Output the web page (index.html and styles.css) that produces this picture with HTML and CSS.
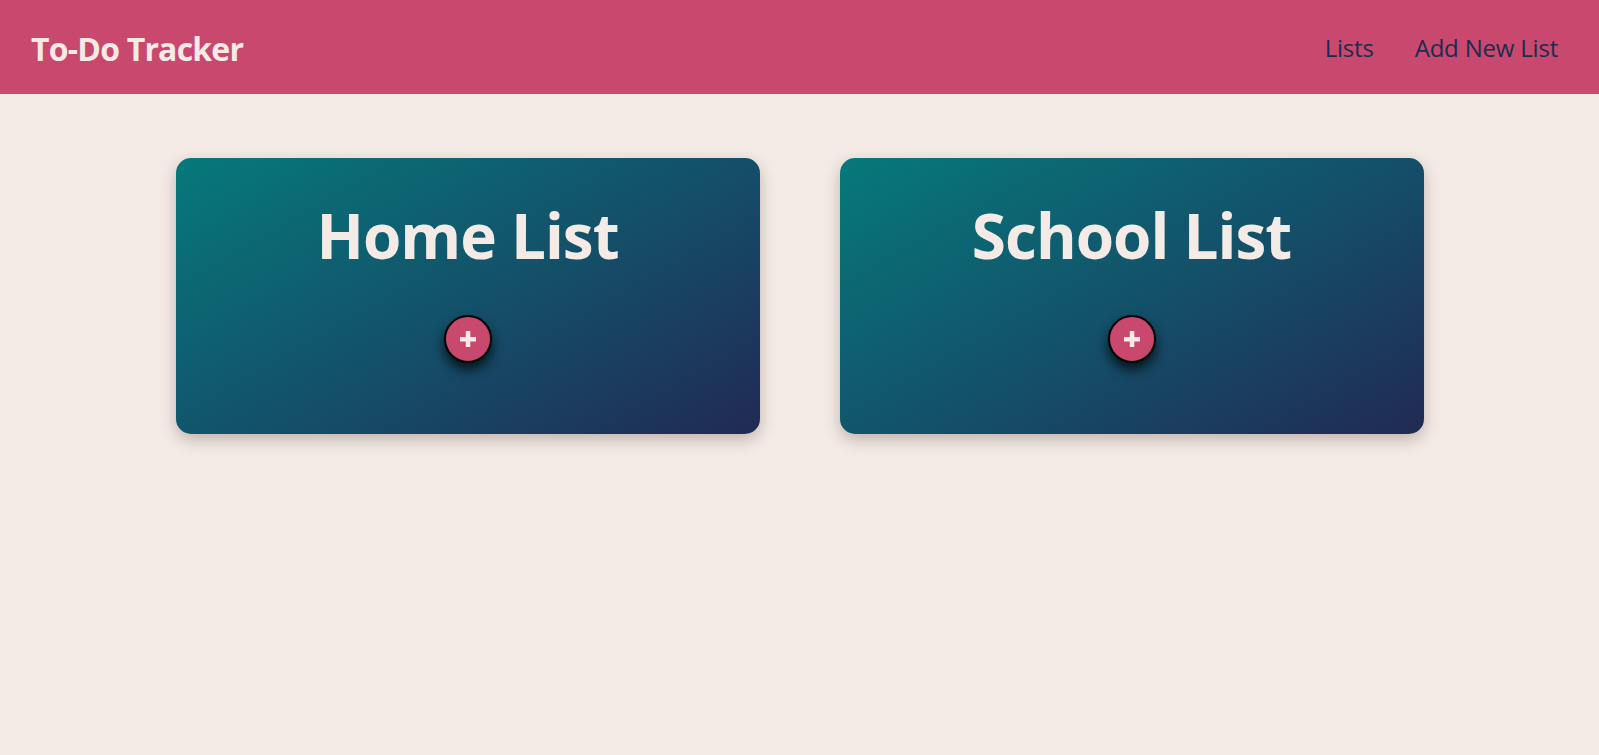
FILE: index.html
```html
<!DOCTYPE html>
<html lang="en">
<head>
<meta charset="utf-8">
<title>To-Do Tracker</title>
<link rel="stylesheet" href="styles.css">
</head>
<body>
<header class="topbar">
  <div class="brand">To-Do Tracker</div>
  <nav class="nav">
    <a class="nav-link" href="#">Lists</a>
    <a class="nav-link" href="#">Add New List</a>
  </nav>
</header>
<main class="lists">
  <section class="card">
    <h2 class="card-title">Home List</h2>
    <button class="add-btn" aria-label="Add item">
      <svg width="16" height="16" viewBox="0 0 16 16"><rect x="0" y="6" width="16" height="4.5" fill="#f4ebe6"/><rect x="5.8" y="0" width="4.5" height="16" fill="#f4ebe6"/></svg>
    </button>
  </section>
  <section class="card">
    <h2 class="card-title">School List</h2>
    <button class="add-btn" aria-label="Add item">
      <svg width="16" height="16" viewBox="0 0 16 16"><rect x="0" y="6" width="16" height="4.5" fill="#f4ebe6"/><rect x="5.8" y="0" width="4.5" height="16" fill="#f4ebe6"/></svg>
    </button>
  </section>
</main>
</body>
</html>
```

FILE: styles.css
```css
* { box-sizing: border-box; }

body {
  margin: 0;
  background: #f4ebe6;
  font-family: "Open Sans", "Noto Sans", sans-serif;
  min-height: 100vh;
}

.topbar {
  height: 94px;
  background: #c9486d;
  display: flex;
  align-items: center;
  justify-content: space-between;
  padding: 0 41px 0 31px;
}

.brand {
  color: #f4ebe6;
  font-size: 32px;
  font-weight: 700;
  letter-spacing: -0.8px;
  padding-top: 2px;
}

.nav {
  display: flex;
  gap: 41px;
}

.nav-link {
  color: #1e2a50;
  font-size: 24px;
  letter-spacing: -0.2px;
  text-decoration: none;
}

.lists {
  display: flex;
  justify-content: center;
  gap: 80px;
  margin-top: 64px;
}

.card {
  width: 584px;
  height: 276px;
  border-radius: 15px;
  background: linear-gradient(150deg, #06797b 0%, #13526a 50%, #212a54 100%);
  box-shadow: 0 6px 16px rgba(60, 40, 30, 0.28);
  display: flex;
  flex-direction: column;
  align-items: center;
  padding-top: 46px;
  gap: 49px;
}

.card-title {
  margin: 0;
  color: #f4ebe6;
  font-size: 62px;
  font-weight: 700;
  letter-spacing: -1px;
  line-height: 1;
}

.add-btn {
  width: 48px;
  height: 48px;
  border-radius: 50%;
  border: 2px solid #000;
  background: #c9486d;
  display: flex;
  align-items: center;
  justify-content: center;
  padding: 0;
  box-shadow: 0 7px 12px rgba(0, 0, 0, 0.7);
  cursor: pointer;
}

.add-btn svg { display: block; }
```
